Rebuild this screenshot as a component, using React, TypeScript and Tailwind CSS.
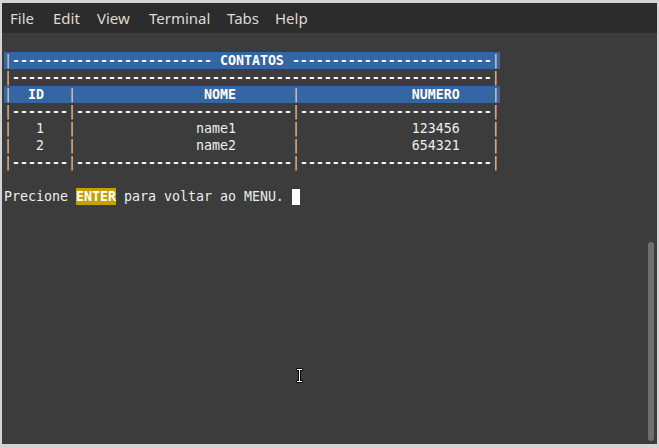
const menus = [
  { label: 'File', w: 'w-[43px]' },
  { label: 'Edit', w: 'w-[44px]' },
  { label: 'View', w: 'w-[52px]' },
  { label: 'Terminal', w: 'w-[78px]' },
  { label: 'Tabs', w: 'w-[48px]' },
  { label: 'Help', w: 'w-[48px]' },
];

const dash = (n: number) => '-'.repeat(n);

const lines: { text: string; blue?: boolean; bold?: boolean }[] = [
  { text: '' },
  { text: `|${dash(25)} CONTATOS ${dash(25)}|`, blue: true, bold: true },
  { text: `|${dash(60)}|` },
  { text: `|  ID   |${' '.repeat(16)}NOME${' '.repeat(7)}|${' '.repeat(14)}NUMERO    |`, blue: true, bold: true },
  { text: `|${dash(7)}|${dash(27)}|${dash(24)}|` },
  { text: `|   1   |${' '.repeat(15)}name1${' '.repeat(7)}|${' '.repeat(14)}123456    |` },
  { text: `|   2   |${' '.repeat(15)}name2${' '.repeat(7)}|${' '.repeat(14)}654321    |` },
  { text: `|${dash(7)}|${dash(27)}|${dash(24)}|` },
  { text: '' },
];

// pipes get their own tint, dash runs are drawn bold white
function Line({ text }: { text: string }) {
  const parts = text.split(/(\||-+)/).filter(Boolean);
  return (
    <>
      {parts.map((p, i) =>
        p === '|' ? (
          <span key={i} className="text-[#efd2b0] font-normal">|</span>
        ) : p[0] === '-' ? (
          <span key={i} className="font-bold text-white">{p}</span>
        ) : (
          <span key={i}>{p}</span>
        )
      )}
    </>
  );
}

export default function App() {
  return (
    <div className="w-[659px] h-[448px] flex flex-col bg-[#d4d4d4] pt-[3px] pl-[2px] pr-[2px] pb-[4px] overflow-hidden">
      {/* Menu bar */}
      <div className="h-[30px] bg-[#2c2c2c] flex items-center pl-[8px] text-[15px] text-[#dfdbd2] font-['Noto_Sans',sans-serif] shrink-0">
        {menus.map((m) => (
          <span key={m.label} className={m.w}>
            {m.label}
          </span>
        ))}
      </div>

      {/* Terminal */}
      <div className="flex-1 bg-[#3c3c3c] flex relative">
        <div className="flex-1 pl-[2px] pt-[2px] font-['DejaVu_Sans_Mono',monospace] text-[13.29px] leading-[17px] text-[#eeeeec] whitespace-pre">
          {lines.map((l, i) => (
            <div
              key={i}
              className={`h-[17px] w-[496px] ${l.blue ? 'bg-[#3465a4] text-white' : ''} ${l.bold ? 'font-bold' : ''}`}
            >
              <Line text={l.text} />
            </div>
          ))}
          <div className="h-[17px] flex items-center">
            <span>Precione </span>
            <span className="bg-[#c4a000] text-white font-bold">ENTER</span>
            <span> para voltar ao MENU. </span>
            <span className="inline-block w-[8px] h-[16px] bg-white" />
          </div>
        </div>

        {/* Scrollbar */}
        <div className="w-[9px] flex flex-col justify-end pb-[3px]">
          <div className="w-[6px] h-[199px] rounded-full bg-[#6f6f6f]" />
        </div>

        {/* Mouse I-beam */}
        <svg className="absolute left-[293px] top-[335px]" width="9" height="15" viewBox="0 0 9 15">
          <path d="M1.5 1.5h6M4.5 1.5v12M1.5 13.5h6" stroke="#000" strokeWidth="3" fill="none" />
          <path d="M2 1.5h5M4.5 1.5v12M2 13.5h5" stroke="#fff" strokeWidth="1" fill="none" />
        </svg>
      </div>
    </div>
  );
}
